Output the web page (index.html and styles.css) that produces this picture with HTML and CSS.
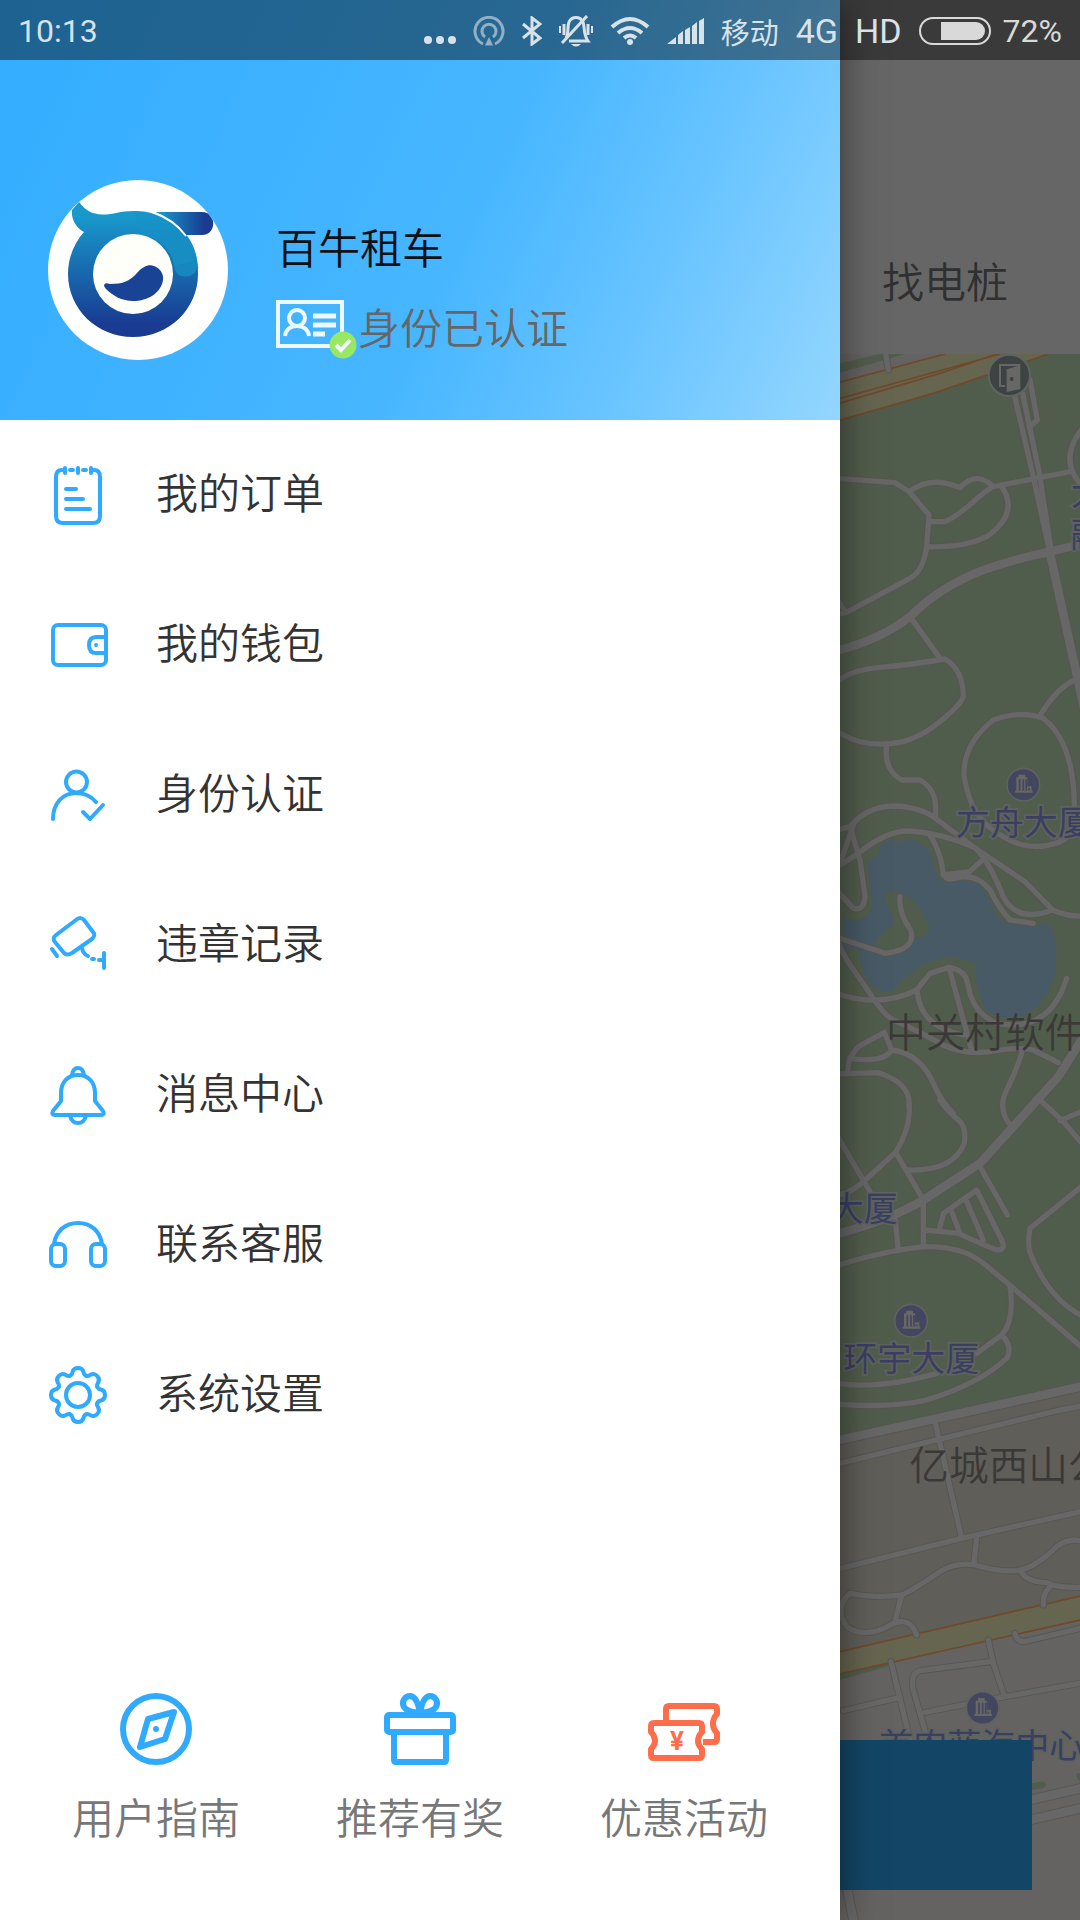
FILE: index.html
```
<!DOCTYPE html>
<html lang="zh-CN">
<head>
    <meta charset="UTF-8">
    <meta name="viewport" content="width=device-width, initial-scale=1.0">
    <title>百牛租车</title>
    <link rel="stylesheet" href="styles.css">
</head>
<body>
    <div class="screen">
        <div class="status-bar">
            <span class="status-time">10:13</span>
            <div class="status-icons">
                <svg width="32" height="30" viewBox="0 0 32 30" fill="currentColor"><circle cx="4" cy="24" r="4"/><circle cx="16" cy="24" r="4"/><circle cx="28" cy="24" r="4"/></svg>
                <svg class="faded" width="32" height="30" viewBox="0 0 32 30" fill="none" stroke="currentColor" stroke-width="3"><path d="M10 28A14 14 0 1 1 22 28"/><path d="M12 21A7 7 0 1 1 20 21"/><path d="M16 21L20 29.500H12Z" fill="currentColor" stroke="none"/></svg>
                <svg width="20" height="30" viewBox="0 0 20 30" fill="none" stroke="currentColor" stroke-width="3"><path d="M1 8L18 22L10 28V2L18 8L1 22"/></svg>
                <svg width="34" height="32" viewBox="0 0 34 32" fill="none" stroke="currentColor" stroke-width="3"><path d="M7 23C10 19 8 12 10 7C13 1 21 1 24 7C26 12 24 19 29 26H10"/><path d="M3 28L28 1"/><path d="M5 9V20M29 9V20" /><path d="M1 11V18M33 11V18" stroke-width="2"/><path d="M12 29H22Q17 34 12 29Z" fill="currentColor" stroke="none"/></svg>
                <svg width="40" height="30" viewBox="0 0 40 30" fill="none" stroke="currentColor" stroke-width="4"><path d="M2 11Q20 -5 38 11"/><path d="M8 17Q20 7 32 17"/><path d="M14 22Q20 17 26 22"/><circle cx="20" cy="26" r="3" fill="currentColor" stroke="none"/></svg>
                <svg width="37" height="26" viewBox="0 0 37 26" fill="currentColor"><path d="M0 26L9 19V26ZM11 17L16 13V26H11ZM18 12L23 9V26H18ZM25 8L30 4V26H25ZM32 3L37 0V26H32Z"/></svg>
                <span class="carrier">移动</span>
                <span class="network">4G</span>
                <span class="network">HD</span>
                <div class="battery">
                    <svg width="72" height="28" viewBox="0 0 72 28"><rect x="1" y="1" width="70" height="26" rx="13" fill="none" stroke="currentColor" stroke-width="2"/><path d="M22 5H57A9 9 0 0 1 57 23H22Z" fill="currentColor"/></svg>
                    <span>72%</span>
                </div>
            </div>
        </div>

        <aside class="drawer">
            <header class="profile">
                <svg class="avatar" viewBox="0 0 180 180">
                    <defs>
                        <linearGradient id="ring" x1="0" y1="0" x2="0" y2="1">
                            <stop offset="0.100" stop-color="#1899cc"/>
                            <stop offset="0.900" stop-color="#193c92"/>
                        </linearGradient>
                        <linearGradient id="bar">
                            <stop offset="0" stop-color="#1b9fd0"/>
                            <stop offset="0.850" stop-color="#193c92"/>
                        </linearGradient>
                        <clipPath id="round"><circle cx="90" cy="90" r="90"/></clipPath>
                    </defs>
                    <circle cx="90" cy="90" r="90" fill="#fff"/>
                    <g clip-path="url(#round)">
                        <path d="M31 22C38 31 44 34 54 34.500C64 35 72 31 85 31C122 31 150 58 150 94C150 129 121 157 85 157C49 157 20 129 20 94C20 78 26 63 36 52C27 47 23 38 24 30Z" fill="url(#ring)"/>
                        <path d="M126 85Q126 96 137 97Q148 97 150 86C148 68 142 57 130 47L110 60Q124 70 126 85Z" fill="#1687bf"/>
                        <path d="M126 88Q128 97 137 97Q147 97 150 87" fill="none" stroke="#176fa8"/>
                        <path d="M85 31C122 31 145 52 149 80L126 86Q122 62 95 55Z" fill="#1892c8" opacity="0.6"/>
                        <path d="M107 32H154C169 32 169 55 154 55H138C130 45 119 37 107 32Z" fill="url(#bar)"/>
                        <path d="M104 32C119 37 130 45 138 56" fill="none" stroke="#fff" stroke-width="2"/>
                        <circle cx="85" cy="94" r="40" fill="#fffffa"/>
                        <path d="M56 105Q57 102 62 104C75 104 82 101 89 93C95 86 101 84 106 86C112 88 116 94 115 100C113 113 100 121 85 121C74 121 65 116 58 109Q56 107 56 105Z" fill="#194495"/>
                    </g>
                </svg>
                <div class="profile-info">
                    <h1 class="profile-name">百牛租车</h1>
                    <div class="profile-status">
                        <svg width="82" height="60" viewBox="0 0 82 60" fill="none" stroke="#f0f8ff">
                            <rect x="2" y="2" width="64" height="44" stroke-width="4"/>
                            <circle cx="21" cy="18" r="8" stroke-width="4"/>
                            <path d="M9 36C10 29 15 26 21 26C27 26 32 29 33 36" stroke-width="4"/>
                            <path d="M37 16H60M37 25H60M37 34H49" stroke-width="5"/>
                            <circle cx="67" cy="45" r="13.500" fill="#99e864" stroke="none"/>
                            <path d="M60 45L65 50L74 40" stroke-width="4"/>
                        </svg>
                        <span>身份已认证</span>
                    </div>
                </div>
            </header>

            <nav class="menu">
                <a class="menu-item" href="#">
                    <svg class="menu-icon" viewBox="0 0 60 60"><path d="M14 5Q8 5 8 12V51Q8 58 15 58H45Q52 58 52 51V12Q52 5 46 5"/><path d="M17 3V8M30 3V8M43 3V8M22 5H25M35 5H38M18 24H28M18 34H35M18 44H42"/></svg>
                    <span>我的订单</span>
                </a>
                <a class="menu-item" href="#">
                    <svg class="menu-icon" viewBox="0 0 60 60"><rect x="5" y="10" width="53" height="40" rx="5"/><path d="M57 22H48Q41 22 41 30Q41 38 48 38H57"/><circle class="dot" cx="48" cy="30" r="2"/></svg>
                    <span>我的钱包</span>
                </a>
                <a class="menu-item" href="#">
                    <svg class="menu-icon" viewBox="0 0 60 60"><circle cx="28.500" cy="17" r="10.500"/><path d="M5 54C5 38 15 28 28 28C36 28 43 31 48 37"/><path d="M35 47L42 54L55 40"/></svg>
                    <span>身份认证</span>
                </a>
                <a class="menu-item" href="#">
                    <svg class="menu-icon" viewBox="0 0 60 60"><path d="M28 5Q32 1 36 5L45 17Q48 20 44 24L24 38Q19 41 16 38L7 27Q4 23 8 20Z"/><path d="M4 34L9 41M34 33Q35 39 40 41M44 44H46M51 45H56M56 38V53"/></svg>
                    <span>违章记录</span>
                </a>
                <a class="menu-item" href="#">
                    <svg class="menu-icon" viewBox="0 0 60 60"><path d="M13 28C13 17 20 10 30 10C40 10 47 17 47 28V36L55 46Q57 50 53 50H7Q3 50 5 46L13 36Z"/><path d="M24 10Q25 3 30 3Q35 3 36 10M22 51Q24 58 30 58Q36 58 38 51"/></svg>
                    <span>消息中心</span>
                </a>
                <a class="menu-item" href="#">
                    <svg class="menu-icon" viewBox="0 0 60 60"><path d="M6 29C8 16 17 8 30 8C43 8 52 16 54 29"/><rect x="3" y="29" width="14" height="22" rx="5"/><rect x="43" y="29" width="14" height="22" rx="5"/></svg>
                    <span>联系客服</span>
                </a>
                <a class="menu-item" href="#">
                    <svg class="menu-icon" viewBox="0 0 60 60">
                        <defs><path id="tooth" d="M22 10.600Q24 10 24.500 7Q25.500 3 30 3Q34.500 3 35.500 7Q36 10 38 10.600"/></defs>
                        <use href="#tooth"/>
                        <use href="#tooth" transform="rotate(45 30 30)"/>
                        <use href="#tooth" transform="rotate(90 30 30)"/>
                        <use href="#tooth" transform="rotate(135 30 30)"/>
                        <use href="#tooth" transform="rotate(180 30 30)"/>
                        <use href="#tooth" transform="rotate(225 30 30)"/>
                        <use href="#tooth" transform="rotate(270 30 30)"/>
                        <use href="#tooth" transform="rotate(315 30 30)"/>
                        <circle cx="30" cy="30" r="12"/>
                    </svg>
                    <span>系统设置</span>
                </a>
            </nav>

            <footer class="shortcuts">
                <a class="shortcut" href="#">
                    <svg class="shortcut-icon" viewBox="0 0 72 72"><circle cx="36" cy="36" r="33"/><path d="M54 19L28 26L20 54L45 46Z"/><circle class="dot" cx="36" cy="36" r="3"/></svg>
                    <span>用户指南</span>
                </a>
                <a class="shortcut" href="#">
                    <svg class="shortcut-icon" viewBox="0 0 72 72"><rect x="3" y="22" width="66" height="17" rx="2"/><path d="M10 39V67Q10 69 12 69H60Q62 69 62 67V39"/><path d="M36 20C34 9 31 3 26 3C21 3 17 9 20 14C23 19 30 19 36 20C42 19 49 19 52 14C55 9 51 3 46 3C41 3 38 9 36 20Z"/></svg>
                    <span>推荐有奖</span>
                </a>
                <a class="shortcut" href="#">
                    <svg class="shortcut-icon orange" viewBox="0 0 72 72"><path d="M18 28V16Q18 13 21 13H66Q69 13 69 16V21Q65 25 65 31Q65 36 69 40V46Q69 49 66 49H55"/><path d="M6 30H51Q54 30 54 33V39Q50 43 50 48Q50 52 54 56V62Q54 65 51 65H6Q3 65 3 62V56Q7 52 7 48Q7 43 3 39V33Q3 30 6 30Z"/><text x="29" y="57" text-anchor="middle">¥</text></svg>
                    <span>优惠活动</span>
                </a>
            </footer>
        </aside>

        <main class="home">
            <div class="home-tabs">找电桩</div>
            <svg class="map" viewBox="30 42 720 4698" preserveAspectRatio="xMinYMin slice">
                <defs>
                    <g id="roads">
                        <g>
                            <path d="M165 30L175 90M30 416L195 428L238 455L297 525L290 620Q280 690 245 712L48 818L20 775M48 818L20 824"/>
                            <path d="M238 455Q300 405 390 443Q440 390 490 440L720 395M297 545H345Q380 530 430 485Q470 450 490 440M290 620Q400 625 470 590Q570 520 515 440M770 250Q680 350 750 430"/>
                            <path d="M240 830L330 955M20 1026Q60 990 150 982Q240 975 345 957Q400 990 400 1070Q390 1100 310 1160Q270 1190 220 1205Q100 1230 20 1172"/>
                            <path d="M552 160L612 420L660 640M578 160L628 400L665 640M600 120L622 240L598 262M760 1012Q690 1025 628 1130"/>
                            <path d="M490 1140Q400 1210 402 1305Q420 1440 520 1490Q600 1540 690 1505Q733 1490 733 1410Q735 1210 640 1135Q570 1110 490 1140"/>
                        </g>
                        <g transform="translate(0 1140)">
                            <path d="M170 75Q160 150 215 180H270Q325 210 316 290M20 330L60 320Q110 260 190 258Q270 260 316 295L440 388L585 485L668 570Q710 590 760 588"/>
                            <path d="M20 442L85 400Q170 330 240 333Q340 340 440 385M60 320L90 420L105 530Q100 575 70 565L20 510M70 315L30 430"/>
                            <path d="M300 345Q335 400 340 465L418 455L458 420M345 465Q350 485 380 473Q440 460 480 510Q510 570 540 600L610 610M440 388Q480 430 520 530Q560 610 668 570"/>
                            <path d="M20 652L165 700Q260 690 242 630Q205 580 210 530M20 660L50 720L140 850Q170 890 190 900Q260 930 340 975Q400 1005 480 995Q560 980 610 990L685 1028"/>
                            <path d="M20 820Q150 865 260 810L300 760L357 742Q410 750 415 800Q430 880 500 910Q660 940 710 775M357 742L425 990M262 815Q270 920 400 945"/>
                            <path d="M163 937L85 980L58 1015Q160 1030 185 990L163 937M58 1015L52 1060M20 1062L145 1058Q245 1090 237 1160M185 990Q270 1000 310 1090Q330 1140 370 1180M575 1000Q560 1050 530 1110Q500 1170 545 1220"/>
                        </g>
                        <g transform="translate(0 2280)">
                            <path d="M237 10Q245 80 197 157L100 245Q60 280 20 285M20 105L120 275M197 157L280 300M232 210Q370 215 403 130Q410 80 385 60Q340 20 330 0L350 25"/>
                            <path d="M630 0L700 65L760 135M690 62L760 32M450 200L532 345M280 300V440M195 355L205 450"/>
                            <path d="M285 390L385 400Q450 430 500 450Q530 450 515 420L440 270L340 340L328 390M365 335L390 400M410 305L460 420"/>
                            <path d="M20 497Q170 450 290 440Q400 440 460 490Q560 570 770 755M540 560Q555 660 515 705L440 760M515 705Q550 740 530 775Q450 850 290 900Q180 925 20 912M20 850Q150 870 340 815M760 255L600 385Q590 440 605 470Q660 600 760 650"/>
                        </g>
                    </g>
                    <g id="lower-roads">
                        <g transform="translate(0 2280)">
                            <path d="M20 1092L690 930L760 918M315 965L395 1315M20 1408L395 1315L760 1233"/>
                        </g>
                        <g transform="translate(0 3420)">
                            <path d="M440 175L432 250M215 345Q130 355 60 340Q10 380 50 440Q110 480 190 430Q240 410 260 465M215 345L195 425M215 345Q250 330 330 275Q380 245 435 255Q520 280 570 270Q620 260 680 200Q720 170 760 185M570 270Q585 305 650 308Q680 325 760 322M660 320Q638 340 640 375"/>
                            <path d="M183 545L240 780M40 692L210 652M290 770L250 630Q240 580 270 572L480 545M475 480L490 550L522 645M285 697L525 650L760 608M555 460Q560 490 590 483L760 443"/>
                        </g>
                    </g>
                    <g id="main-roads">
                        <path d="M20 932Q150 900 240 830Q330 740 460 690Q560 655 660 635L760 610M660 640L770 1140"/>
                        <path d="M780 2060L685 2210L545 2365L450 2470L280 2580Q180 2640 20 2682M20 3302L760 3138M600 4380L760 4343M600 4440L760 4403M50 4640L72 4750"/>
                    </g>
                    <g id="building">
                        <circle r="49"/>
                        <path d="M-25 24V18H-21V-22H-14V-30H6V-22H12V5H25V18H28V24Z" fill="#676765" stroke="none"/>
                        <path d="M-11 -16V18M0 -16V18M9 -16V18M14 14H20" fill="none" stroke="#43465f" stroke-width="5"/>
                    </g>
                </defs>

                <rect class="grass" x="30" y="42" width="720" height="4700"/>
                <path class="ground" d="M30 3300L750 3140V4740H30Z"/>
                <path class="block" d="M30 4002L750 3840V4740H30ZM30 42H345L30 126Z"/>
                <path class="grass" d="M30 70L150 42H225L30 98ZM30 4002L175 3970V3978L30 4020ZM606 4330L640 4324Q655 4335 640 4344L606 4350ZM740 4300H750V4322Q738 4318 740 4300Z"/>
                <path class="highway" d="M30 126L345 42H655L310 160L30 240ZM30 3935L750 3768V3840L30 4002Z"/>
                <path class="highway-line" d="M20 129L345 42M20 178L510 42M20 192L330 100L500 42M20 243L310 160L655 42M20 3937L760 3766M20 4004L760 3838"/>

                <g transform="translate(0 1140)">
                    <path class="water" d="M110 425L150 400L145 380L185 358L205 368Q250 345 290 385Q310 410 315 450Q335 500 360 485Q420 470 455 500Q485 540 500 590Q560 630 650 610Q690 640 675 760Q640 870 570 890Q490 900 460 860Q450 810 435 780L440 730Q350 695 290 730Q230 760 190 810Q140 830 105 770Q90 720 85 690L40 685V592Q110 615 125 560Q120 480 110 425Z"/>
                    <path class="grass" d="M165 520Q200 500 260 550L300 625Q290 650 250 655Q220 700 165 710L130 680Q150 640 190 615Q195 590 165 545Z"/>
                </g>

                <use class="road-edge" href="#roads"/>
                <use class="road-edge" href="#lower-roads"/>
                <use class="road-edge wide" href="#main-roads"/>
                <use class="road" href="#roads"/>
                <use class="road" href="#lower-roads"/>
                <use class="road wide" href="#main-roads"/>

                <circle class="gate" cx="538" cy="106" r="62"/>
                <path d="M525 138H510V75H568V145L533 152V90L568 80" fill="none" stroke="#676765" stroke-width="6"/>
                <path d="M533 88L568 80V145L533 152Z" fill="#676765"/>
                <circle cx="545" cy="117" r="6" fill="#3d4342"/>

                <use class="poi" href="#building" x="580" y="1334"/>
                <use class="poi" href="#building" x="243" y="2942"/>
                <use class="poi" href="#building" x="458" y="4104"/>

                <g class="poi-label">
                    <text x="722" y="494">大</text>
                    <text x="722" y="620">融</text>
                    <text x="377" y="1485">方舟大厦</text>
                    <text x="-1" y="2642">大厦</text>
                    <text x="40" y="3092">环宇大厦</text>
                    <text x="148" y="4254">首农蓝海中心</text>
                </g>
                <g class="area-label">
                    <text x="168" y="2121">中关村软件</text>
                    <text x="238" y="3421">亿城西山公</text>
                </g>
            </svg>
            <button class="home-action" type="button" aria-label="用车"></button>
        </main>
    </div>
</body>
</html>
```
FILE: styles.css
```
* {
    box-sizing: border-box;
}

body {
    margin: 0;
    background-color: #666666;
    font-family: Roboto, "Noto Sans CJK SC", sans-serif;
    font-size: 42px;
    font-weight: 350;
    color: #333333;
}

a {
    color: inherit;
    text-decoration: none;
}

.screen {
    position: relative;
    display: flex;
    min-height: 100vh;
    overflow: hidden;
}

/* status bar sits over both the drawer and the home page */
.status-bar {
    position: absolute;
    top: 0;
    left: 0;
    right: 0;
    z-index: 2;
    display: flex;
    justify-content: space-between;
    align-items: center;
    height: 60px;
    padding: 2px 18px 0 18px;
    background-color: rgba(0, 0, 0, 0.43);
    color: #d9e2e8;
    font-size: 32px;
    font-weight: 400;
}

.status-icons {
    display: flex;
    align-items: center;
    gap: 17px;
}

.carrier {
    font-size: 29px;
}

.network {
    font-size: 34px;
}

.battery {
    display: flex;
    align-items: center;
    gap: 12px;
    color: #d9d9d9;
}

.faded {
    opacity: 0.6;
}

/* drawer */
.drawer {
    position: relative;
    z-index: 1;
    flex: 7 0 0;
    display: flex;
    flex-direction: column;
    background-color: #ffffff;
    box-shadow: 0 0 36px rgba(0, 0, 0, 0.5);
}

.profile {
    display: flex;
    align-items: flex-end;
    gap: 48px;
    height: 420px;
    padding: 0 48px 60px;
    background: linear-gradient(115deg, #33adff 0%, #47b6ff 55%, #66c3ff 75%, #94d6ff 100%);
}

.avatar {
    width: 180px;
    height: 180px;
}

.profile-info {
    display: flex;
    flex-direction: column;
    gap: 20px;
    line-height: 60px;
}

.profile-name {
    margin: 0;
    font-size: 42px;
    font-weight: inherit;
    color: #111111;
}

.profile-status {
    display: flex;
    align-items: center;
    color: #666666;
}

.menu {
    flex: 1;
}

.menu-item {
    display: flex;
    align-items: center;
    gap: 48px;
    height: 150px;
    padding: 0 48px;
    line-height: 60px;
}

.menu-icon {
    width: 60px;
    height: 60px;
    fill: none;
    stroke: #2faaff;
    stroke-width: 4;
    stroke-linecap: round;
    stroke-linejoin: round;
}

.dot {
    fill: #2faaff;
    stroke: none;
}

.shortcuts {
    display: flex;
    padding: 0 24px 70px;
}

.shortcut {
    flex: 1;
    display: flex;
    flex-direction: column;
    align-items: center;
    gap: 25px;
    line-height: 60px;
    color: #777777;
}

.shortcut-icon {
    width: 72px;
    height: 72px;
    fill: none;
    stroke: #2faaff;
    stroke-width: 6;
    stroke-linejoin: round;
}

.shortcut-icon.orange {
    stroke: #ff6d4a;
}

.shortcut-icon text {
    font-size: 26px;
    font-weight: 700;
    fill: #ff6d4a;
    stroke: none;
}

/* dimmed home page */
.home {
    position: relative;
    flex: 2 0 0;
    min-width: 0;
    display: flex;
    flex-direction: column;
}

.home-tabs {
    display: flex;
    align-items: flex-end;
    height: 354px;
    padding: 0 0 40px 42px;
    line-height: 60px;
    white-space: nowrap;
    color: #303030;
}

.home-action {
    position: absolute;
    left: 0;
    right: 48px;
    bottom: 30px;
    height: 150px;
    border: none;
    background-color: #134666;
}

.map {
    display: block;
    flex: 1;
    width: 100%;
    min-height: 0;
}

.grass {
    fill: #515d4c;
}

.ground {
    fill: #605e58;
}

.block {
    fill: #646361;
}

.water {
    fill: #485a66;
}

.highway {
    fill: #666550;
}

.highway-line {
    fill: none;
    stroke: #70492b;
    stroke-width: 5;
}

.road,
.road-edge {
    fill: none;
    stroke-linecap: round;
    stroke-linejoin: round;
}

.road {
    stroke: #676767;
    stroke-width: 16;
}

.road-edge {
    stroke: #575550;
    stroke-width: 21;
}

.road.wide {
    stroke-width: 26;
}

.road-edge.wide {
    stroke-width: 31;
}

.gate {
    fill: #3d4342;
    stroke: #5f6461;
    stroke-width: 6;
}

.poi {
    fill: #43465f;
    stroke: #5f625f;
    stroke-width: 5;
}

.poi-label {
    font-size: 102px;
    font-weight: 400;
    fill: #3a3f62;
    stroke: #5f635f;
    stroke-width: 10;
    paint-order: stroke;
}

.area-label {
    font-size: 119px;
    fill: #3a3937;
}
```
